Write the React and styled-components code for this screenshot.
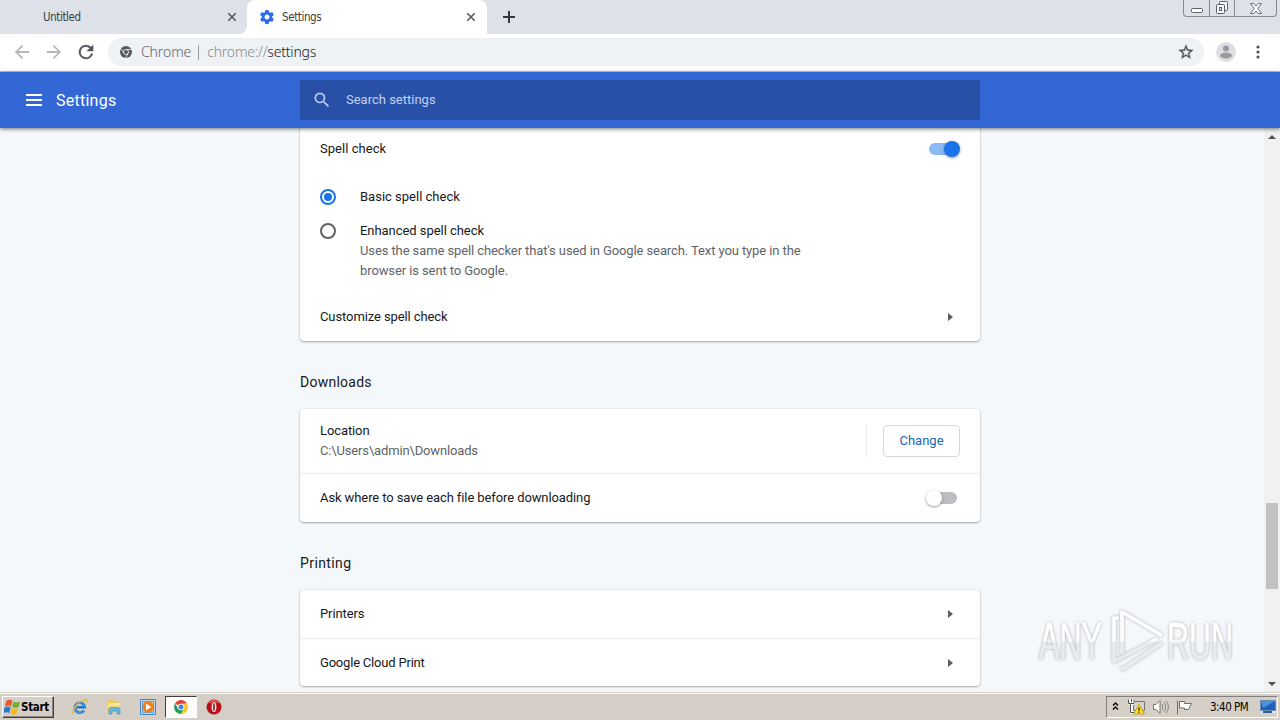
import styled, { createGlobalStyle } from "styled-components";
import { useState } from "react";

const GlobalStyle = createGlobalStyle`
  * { box-sizing: border-box; }
  body { margin: 0; overflow: hidden; }
  button { margin: 0; padding: 0; border: 0; background: none; font: inherit; }
  svg { display: block; flex: none; }
`;

const Screen = styled.div`
  display: flex;
  flex-direction: column;
  width: 1280px;
  height: 720px;
  overflow: hidden;
  position: relative;
  background: #f5f8fb;
  color: #17191c;
  font-family: Roboto, "Liberation Sans", sans-serif;
  font-size: 13px;
`;

/* browser frame */
const TabStrip = styled.div`
  display: flex;
  flex: none;
  height: 34px;
  background: #dee1e8;
`;
const Tab = styled.div`
  display: flex;
  align-items: center;
  width: ${(props) => (props.$active ? 240 : 247)}px;
  height: 34px;
  padding: 0 ${(props) => (props.$active ? "11px 0 13px" : "10px 0 43px")};
  border-radius: ${(props) => (props.$active ? "8px 8px 0 0" : "0 0 8px 0")};
  background: ${(props) => (props.$active ? "#fff" : "#dee1e8")};
  color: #3c4043;
  font-family: "DejaVu Sans Condensed", "DejaVu Sans", sans-serif;
  font-size: 11.5px;
  letter-spacing: -0.4px;
  svg:last-child { margin-left: auto; }
`;
const TabTitle = styled.span`
  margin-left: ${(props) => props.$gap || 0}px;
`;
const TabCorner = styled.div`
  background: #fff;
  flex: none;
`;
const TabRest = styled.div`
  display: flex;
  flex: 1;
  padding-left: 15px;
  align-items: center;
  border-radius: 0 0 0 8px;
  background: #dee1e8;
`;
const WindowButtons = styled.div`
  display: flex;
  align-self: flex-start;
  margin-left: auto;
  margin-right: 3px;
  height: 17px;
  border: 1px solid #858993;
  border-top: 0;
  border-radius: 0 0 4px 4px;
`;
const WindowButton = styled.div`
  display: flex;
  align-items: center;
  justify-content: center;
  width: ${(props) => props.$width}px;
  & + & { border-left: 1px solid #858993; }
`;
const Toolbar = styled.div`
  display: flex;
  flex: none;
  align-items: center;
  height: 38px;
  padding: 0 14px 1px;
  background: #fff;
  border-bottom: 1px solid #c5cad6;
  > svg { margin-right: 16px; }
`;
const AddressBar = styled.div`
  display: flex;
  flex: none;
  align-items: center;
  width: 1096px;
  height: 28px;
  margin-left: -2px;
  padding: 0 10px 0 12px;
  border-radius: 14px;
  background: #eff2f5;
  color: #5f6368;
  font-family: "Noto Sans", "Open Sans", sans-serif;
  font-weight: 300;
  font-size: 14px;
  line-height: 18px;
  svg:last-child { margin-left: auto; }
`;
const SiteName = styled.span`
  margin: -1px 0 0 9px;
  letter-spacing: -0.1px;
`;
const Divider = styled.span`
  width: 1px;
  height: 15px;
  margin: 0 8px 0 7px;
  background: #989ca1;
`;
const Url = styled.span`
  margin-top: -1px;
  color: #84888d;
  letter-spacing: -0.2px;
  b { font-weight: 300; color: #17191c; }
`;
const Avatar = styled.div`
  flex: none;
  margin: 0 20px 0 12px;
`;

/* settings page */
const Header = styled.header`
  display: flex;
  flex: none;
  align-items: center;
  height: 56px;
  padding-left: 26px;
  background: #3367d6;
  color: #fff;
  z-index: 1;
  box-shadow: 0 1px 4px rgba(0, 0, 0, 0.55);
`;
const PageTitle = styled.h1`
  width: 244px;
  margin: 0 0 0 14px;
  padding-top: 2px;
  font-size: 16px;
  font-weight: 400;
  line-height: 20px;
  letter-spacing: 0.25px;
`;
const SearchBox = styled.div`
  display: flex;
  align-items: center;
  flex: none;
  width: 680px;
  height: 40px;
  padding: 0 0 0 12px;
  background: #2850a7;
  color: #c3d2f2;
  line-height: 20px;
  svg { margin-right: 14px; }
`;
const SearchText = styled.span`
  letter-spacing: 0;
`;
const Viewport = styled.div`
  display: flex;
  flex: 1;
  min-height: 0;
  overflow: hidden;
`;
const Content = styled.main`
  flex: 1;
  padding-left: 300px;
`;
const Card = styled.section`
  width: 680px;
  height: ${(props) => props.$height}px;
  background: #fff;
  border-radius: ${(props) => (props.$cut ? "0 0 4px 4px" : "4px")};
  box-shadow: 0 1px 2px rgba(60, 64, 67, 0.4), 0 0 2px rgba(60, 64, 67, 0.2);
`;
const Heading = styled.h2`
  height: 68px;
  margin: 0;
  padding-top: 31px;
  font-size: 14px;
  line-height: 20px;
  font-weight: 400;
  letter-spacing: ${(props) => props.$spacing}px;
`;
const Row = styled.div`
  display: flex;
  align-items: center;
  justify-content: space-between;
  height: ${(props) => props.$height || 48}px;
  padding: 0 20px;
  line-height: 20px;
  & + & { box-sizing: content-box; border-top: 1px solid #e6e8eb; }
`;
const Label = styled.div`
  letter-spacing: ${(props) => props.$spacing ?? -0.1}px;
`;
const Note = styled.div`
  color: #5f6368;
  letter-spacing: ${(props) => props.$spacing ?? -0.1}px;
`;
const RadioGroup = styled.div`
  padding: 10px 20px 12px;
  line-height: 20px;
`;
const RadioRow = styled.div`
  display: flex;
  padding: 7px 0 ${(props) => (props.$last ? 0 : 7)}px;
`;
const Radio = styled.button`
  display: flex;
  align-items: center;
  justify-content: center;
  flex: none;
  width: 16px;
  height: 16px;
  margin: 2px 24px 0 0;
  border: 2px solid ${(props) => (props.$on ? "#1a73e8" : "#5f6368")};
  border-radius: 50%;
  &::after {
    content: "";
    width: 8px;
    height: 8px;
    border-radius: 50%;
    background: ${(props) => (props.$on ? "#1a73e8" : "transparent")};
  }
`;
const Switch = styled.button`
  display: flex;
  align-items: center;
  justify-content: ${(props) => (props.$on ? "flex-end" : "flex-start")};
  width: 28px;
  height: 12px;
  margin-right: 3px;
  border-radius: 6px;
  background: ${(props) => (props.$on ? "#8cb8f3" : "#bdbdc2")};
  &::after {
    content: "";
    width: 16px;
    height: 16px;
    margin: 0 -3px;
    border-radius: 50%;
    background: ${(props) => (props.$on ? "#1a73e8" : "#fff")};
    box-shadow: 0 1px 3px rgba(0, 0, 0, 0.4);
  }
`;
const Arrow = styled.span`
  margin-right: 7px;
  border: 4px solid transparent;
  border-left: 5px solid #5a5e63;
  border-right: 0;
`;
const ChangeArea = styled.div`
  display: flex;
  align-items: center;
  height: 32px;
  padding-left: 16px;
  border-left: 1px solid #e8eaed;
`;
const ChangeButton = styled.button`
  width: 77px;
  height: 32px;
  border: 1px solid #d5d8dc;
  border-radius: 4px;
  color: #1967b5;
  letter-spacing: 0;
`;
const Scrollbar = styled.div`
  display: flex;
  flex-direction: column;
  align-items: center;
  width: 16px;
  padding: 7px 0 6px;
  background: #f1f1f1;
`;
const ScrollArrow = styled.span`
  border: 4px solid transparent;
  ${(props) => (props.$down ? "border-top-color" : "border-bottom-color")}: #505050;
  ${(props) => (props.$down ? "border-bottom" : "border-top")}: 0;
  ${(props) => (props.$down ? "margin-top: auto;" : "")}
`;
const ScrollThumb = styled.span`
  width: 12px;
  height: 86px;
  margin-top: 364px;
  background: #c1c1c1;
`;
const Watermark = styled.svg`
  position: absolute;
  left: 1030px;
  top: 600px;
  z-index: 2;
`;

/* taskbar */
const Taskbar = styled.footer`
  display: flex;
  flex: none;
  align-items: center;
  height: 28px;
  padding: 1px 2px 0;
  background: #d6cfc7;
  border-top: 1px solid #d4d0c8;
  box-shadow: inset 0 1px #fff;
  color: #000;
`;
const StartButton = styled.button`
  display: flex;
  align-items: center;
  width: 52px;
  height: 22px;
  padding-left: 1px;
  border: 1px solid;
  border-color: #fff #404040 #404040 #fff;
  box-shadow: inset -1px -1px #8b8680;
  font-family: "DejaVu Sans Condensed", sans-serif;
  font-weight: 700;
  font-size: 11.5px;
  letter-spacing: -0.3px;
`;
const TaskIcons = styled.div`
  display: flex;
  align-items: center;
  margin-left: 9px;
`;
const TaskItem = styled.div`
  display: flex;
  align-items: center;
  justify-content: center;
  width: ${(props) => (props.$active ? 32 : 34)}px;
  height: 22px;
  border: 1px solid;
  border-color: ${(props) => (props.$active ? "#404040 #fff #fff #404040" : "transparent")};
  background: ${(props) => (props.$active ? "#fcfbfa" : "transparent")};
`;
const Tray = styled.div`
  display: flex;
  align-items: center;
  width: 172px;
  height: 22px;
  margin-left: auto;
  padding-left: 4px;
  border: 1px solid;
  border-color: #808080 #fff #fff #808080;
`;
const Clock = styled.span`
  width: 50px;
  margin-left: 17px;
  font-family: "DejaVu Sans Condensed", sans-serif;
  font-size: 11.5px;
  letter-spacing: -0.5px;
  white-space: nowrap;
`;

const CloseIcon = () => (
  <svg width="10" height="10" viewBox="0 0 10 10" stroke="#55585d" strokeWidth="1.6">
    <path d="M1.300 1.300l7.400 7.400M8.700 1.300L1.300 8.700" />
  </svg>
);
const GearIcon = () => (
  <svg width="14" height="14" viewBox="2 2 20 20">
    <path
      fill="#2b6de8"
      d="M19.43 12.98c.04-.32.07-.64.07-.98s-.03-.66-.07-.98l2.11-1.65c.19-.15.24-.42.12-.64l-2-3.46c-.12-.22-.39-.3-.61-.22l-2.49 1c-.52-.4-1.08-.73-1.69-.98l-.38-2.65A.49.49 0 0 0 14 2h-4c-.25 0-.46.18-.49.42l-.38 2.65c-.61.25-1.17.59-1.69.98l-2.49-1c-.23-.09-.49 0-.61.22l-2 3.46c-.13.22-.07.49.12.64l2.11 1.65c-.04.32-.07.65-.07.98s.03.66.07.98l-2.11 1.65c-.19.15-.24.42-.12.64l2 3.46c.12.22.39.3.61.22l2.49-1c.52.4 1.08.73 1.69.98l.38 2.65c.03.24.24.42.49.42h4c.25 0 .46-.18.49-.42l.38-2.65c.61-.25 1.17-.59 1.69-.98l2.49 1c.23.09.49 0 .61-.22l2-3.46c.12-.22.07-.49-.12-.64l-2.11-1.65zM12 15.5c-1.93 0-3.5-1.57-3.5-3.5s1.57-3.5 3.5-3.5 3.5 1.57 3.5 3.5-1.57 3.5-3.5 3.5z"
    />
  </svg>
);
const ArrowIcon = ({ flip }) => (
  <svg width="16" height="16" viewBox="3 3 18 18" fill="#b4b7bb">
    <path
      transform={flip ? "rotate(180 12 12)" : undefined}
      d="M20 11H7.83l5.59-5.59L12 4l-8 8 8 8 1.41-1.41L7.83 13H20v-2z"
    />
  </svg>
);
const ReloadIcon = () => (
  <svg width="16" height="16" viewBox="3 3 18 18" fill="#505458" stroke="#505458" strokeWidth=".4">
    <path d="M17.65 6.35A7.96 7.96 0 0 0 12 4a8 8 0 1 0 7.73 10h-2.08A6 6 0 1 1 12 6c1.66 0 3.14.69 4.22 1.78L13 11h7V4l-2.35 2.35z" />
  </svg>
);
const ChromeMono = () => (
  <svg width="12" height="12" viewBox="0 0 12 12">
    <circle cx="6" cy="6" r="6" fill="#54585d" />
    <circle cx="6" cy="6" r="2.5" fill="none" stroke="#eff2f5" strokeWidth="0.9" />
    <path d="M6 3.5h5.4M3.8 7.2L1.2 2.9M8.2 7.2L5.6 11.9" stroke="#eff2f5" strokeWidth="0.8" />
  </svg>
);
const StarIcon = () => (
  <svg width="16" height="16" viewBox="1 1 22 22" fill="#505458" stroke="#505458" strokeWidth=".5">
    <path d="M22 9.24l-7.19-.62L12 2 9.19 8.63 2 9.24l5.46 4.73L5.82 21 12 17.27 18.18 21l-1.63-7.03L22 9.24zM12 15.4l-3.76 2.27 1-4.28-3.32-2.88 4.38-.38L12 6.1l1.71 4.04 4.38.38-3.32 2.88 1 4.28L12 15.4z" />
  </svg>
);
const SearchIcon = () => (
  <svg width="20" height="20" viewBox="0 0 24 24" fill="#bdcdf2">
    <path d="M15.5 14h-.79l-.28-.27A6.47 6.47 0 0 0 16 9.5 6.5 6.5 0 1 0 9.5 16c1.61 0 3.09-.59 4.23-1.57l.27.28v.79l5 4.99L20.49 19l-4.99-5zm-6 0C7.01 14 5 11.99 5 9.5S7.01 5 9.5 5 14 7.01 14 9.5 11.99 14 9.5 14z" />
  </svg>
);

const WindowsFlag = () => (
  <svg width="17" height="17" viewBox="1 1 14 14">
    <path fill="#e8562a" d="M3 2.5c2-1.2 3.5-1 5 0L6.8 7.2c-1.600-1-3-1-5 0z" />
    <path fill="#6fae2e" d="M8.800 3c1.700 1 3.400 1 5.400 0L13 7.500c-2 1.100-3.600 1-5.300 0z" />
    <path fill="#2f78c8" d="M1.500 8c2-1.100 3.500-1 5 0l-1.200 4.700c-1.600-1-3-1-5 0z" />
    <path fill="#f6b91c" d="M7.300 8.400c1.700 1 3.400 1 5.400 0l-1.200 4.700c-2 1.100-3.600 1-5.300 0z" />
  </svg>
);
const ExplorerIcon = () => (
  <svg width="18" height="18" viewBox="0 0 18 18" fill="none">
    <path d="M13 12.500a5 5 0 1 1 .8-3.300H5.500" stroke="#1e73c8" strokeWidth="2.600" />
    <path d="M13 12.500a5 5 0 1 1 .8-3.300" stroke="#56b6ef" strokeWidth="0.800" />
    <path d="M2.500 16C-.5 14 7 3.500 13.500 1.700c2.500-.7 3 .8 2 3" stroke="#e5b531" strokeWidth="1.400" />
  </svg>
);
const FolderIcon = () => (
  <svg width="16" height="16" viewBox="0 0 16 16">
    <path d="M2 1h5l1 2h6v10H2z" fill="#e9c95e" />
    <path d="M3 4h11v8H3z" fill="#f8e99d" />
    <path d="M1 6h13v3H1z" fill="#f3dc7c" />
    <path d="M3 15V10.500q0-2 2-2h7q2 0 2 2V15h-3v-3H6v3z" fill="#65b8dc" stroke="#3b8fb9" strokeWidth=".6" />
  </svg>
);
const MediaIcon = () => (
  <svg width="16" height="16" viewBox="0 0 16 16">
    <path d="M.5.500h15v15H.5z" fill="#b9d5ee" stroke="#4387c4" />
    <path d="M2.500 2.500h11v11h-11z" fill="#f5b45c" stroke="#6ba5d7" />
    <circle cx="8" cy="8" r="5.500" fill="#f07c13" />
    <path d="M6 4.500l5.500 3.500L6 11.500z" fill="#fff" />
  </svg>
);
const ChromeIcon = () => (
  <svg width="14" height="14" viewBox="0 0 14 14">
    <path d="M7 7L1 3.500A7 7 0 0 1 13 3.500L7 3.900z" fill="#df4336" />
    <path d="M7 3.900L13 3.500A7 7 0 0 1 7 14L9.700 8.500z" fill="#f9c52a" />
    <path d="M1 3.500A7 7 0 0 0 7 14l2.700-5.400L4.300 8.500z" fill="#27995a" />
    <circle cx="7" cy="7" r="3.300" fill="#fff" />
    <circle cx="7" cy="7" r="2.500" fill="#4285e9" />
  </svg>
);
const OperaIcon = () => (
  <svg width="16" height="16" viewBox="0 0 16 16">
    <circle cx="8" cy="8" r="7.500" fill="#b90f18" />
    <path d="M3 4a6.500 6.500 0 0 1 10 0" stroke="#e76865" strokeWidth="1.500" fill="none" />
    <ellipse cx="8" cy="8" rx="2.400" ry="5" fill="#f7e7e6" />
    <ellipse cx="8" cy="8" rx=".8" ry="4.200" fill="#8e0b12" />
  </svg>
);
const TrayIcons = () => (
  <svg width="82" height="18" viewBox="0 0 82 18" fill="none">
    <path d="M2 7.500L4.500 5 7 7.500M2 11.500L4.500 9 7 11.500" stroke="#000" strokeWidth="1.400" />
    <path d="M22.500 3.500h11v9h-11z" fill="#d5d1cc" stroke="#77736e" />
    <path d="M18.500 1.500v4h2v9h5M18.500 5.500h4v-4M20.500 1v3" stroke="#fff" strokeWidth="2.500" />
    <path d="M17.500 1.500v4h2v9h6M18 5.500h5v-4M20.500 1v3" stroke="#55514d" />
    <path d="M28 6l5.500 10h-11z" fill="#ffdd20" stroke="#b49608" strokeWidth=".7" />
    <path d="M28 9.500v3M28 13.500v1.200" stroke="#222" strokeWidth="1.400" />
    <path d="M42.500 6.500H45l4-4v13l-4-4h-2.500z" fill="#fff" stroke="#77736e" />
    <path d="M51 6q2 3 0 6M53 4.500q3.500 4.500 0 9M55 3q5 6 0 12" stroke="#8b8782" />
    <path d="M66.500 2.500v14M68.500 3.500h5v2h7l-3 6h-4v-1.500h-5z" fill="#fff" stroke="#6e6a66" />
  </svg>
);
const DesktopIcon = () => (
  <svg width="16" height="14" viewBox="0 0 16 14">
    <path d="M.5.500h15v10H.5z" fill="#2160bd" stroke="#6d8db5" />
    <path d="M1 1h14L3 8z" fill="#4c93e0" />
    <path d="M0 11h16v2H0z" fill="#dce6ef" />
    <path d="M3 11h9v2H3z" fill="#315e92" />
  </svg>
);

function Brand() {
  return (
    <Watermark width="250" height="85" viewBox="0 0 250 85">
      <defs>
        <linearGradient id="brandFill" gradientUnits="userSpaceOnUse" x1="0" y1="0" x2="0" y2="80">
          <stop offset="0.51" stopColor="#fff" />
          <stop offset="0.53" stopColor="#e9ebed" />
        </linearGradient>
        <filter id="brandShadow" x="-10%" y="-10%" width="120%" height="120%">
          <feDropShadow dx="0" dy="0" stdDeviation="1.6" floodColor="#7f8388" floodOpacity="0.7" />
        </filter>
      </defs>
      <g
        filter="url(#brandShadow)"
        fill="url(#brandFill)"
        stroke="url(#brandFill)"
        strokeWidth="0.6"
        fontFamily="Liberation Sans, sans-serif"
        fontWeight="400"
        fontSize="52"
      >
        <text x="9" y="59" textLength="63" lengthAdjust="spacingAndGlyphs">ANY</text>
        <text x="137" y="59" textLength="66" lengthAdjust="spacingAndGlyphs">RUN</text>
        <g fill="none" strokeWidth="3.600" strokeLinejoin="round">
          <path d="M92 54V12l40 23.500" />
          <path d="M88.500 18H84v43.500l43-22.500" />
          <path d="M91 67l2 2 39-26" />
        </g>
      </g>
    </Watermark>
  );
}

function App() {
  const [spellCheck, setSpellCheck] = useState(true);
  const [mode, setMode] = useState("basic");
  const [ask, setAsk] = useState(false);

  return (
    <Screen>
      <GlobalStyle />
      <TabStrip>
        <TabCorner>
          <Tab>
            <TabTitle>Untitled</TabTitle>
            <CloseIcon />
          </Tab>
        </TabCorner>
        <Tab $active>
          <GearIcon />
          <TabTitle $gap={8}>Settings</TabTitle>
          <CloseIcon />
        </Tab>
        <TabRest>
          <svg width="14" height="14" viewBox="0 0 14 14" stroke="#34373b" strokeWidth="2">
            <path d="M7 1v12M1 7h12" />
          </svg>
          <WindowButtons>
            <WindowButton $width={25}>
              <svg width="12" height="17" viewBox="0 0 12 17">
                <rect x=".5" y="8.5" width="11" height="4" rx="1" fill="#fff" stroke="#5b5f69" />
              </svg>
            </WindowButton>
            <WindowButton $width={25}>
              <svg width="14" height="14" viewBox="0 0 14 14" fill="#f5f6f8" stroke="#5b5f69">
                <rect x="4.500" y=".5" width="8" height="9" rx="1" />
                <rect x="1.500" y="3.500" width="8" height="9" rx="1" />
                <rect x="4.500" y="6.500" width="2" height="3" />
              </svg>
            </WindowButton>
            <WindowButton $width={42}>
              <svg width="12" height="11" viewBox="0 0 12 11" fill="#fff" stroke="#5b5f69" strokeWidth=".9">
                <path d="M.5.500h3L6 3 8.500.500h3L7.800 5.500l3.700 5h-3L6 8l-2.500 2.500h-3l3.700-5z" />
              </svg>
            </WindowButton>
          </WindowButtons>
        </TabRest>
      </TabStrip>
      <Toolbar>
        <ArrowIcon />
        <ArrowIcon flip />
        <ReloadIcon />
        <AddressBar>
          <ChromeMono />
          <SiteName>Chrome</SiteName>
          <Divider />
          <Url>
            chrome://<b>settings</b>
          </Url>
          <StarIcon />
        </AddressBar>
        <Avatar>
          <svg width="20" height="20" viewBox="0 0 20 20" fill="#9b9b9d">
            <circle cx="10" cy="10" r="10" fill="#dedfe1" />
            <circle cx="10" cy="6.500" r="3" />
            <ellipse cx="10" cy="13.500" rx="6" ry="3" />
          </svg>
        </Avatar>
        <svg width="4" height="14" viewBox="0 0 4 14" fill="#505458">
          <circle cx="2" cy="2" r="1.600" />
          <circle cx="2" cy="7" r="1.600" />
          <circle cx="2" cy="12" r="1.600" />
        </svg>
      </Toolbar>
      <Header>
        <svg width="16" height="12" viewBox="0 0 16 12" fill="#fff">
          <path d="M0 0h16v2H0zM0 5h16v2H0zM0 10h16v2H0z" />
        </svg>
        <PageTitle>Settings</PageTitle>
        <SearchBox>
          <SearchIcon />
          <SearchText>Search settings</SearchText>
        </SearchBox>
      </Header>
      <Viewport>
        <Content>
          <Card $cut $height={213}>
            <Row $height={42}>
              <Label $spacing={0.05}>Spell check</Label>
              <Switch $on={spellCheck} onClick={() => setSpellCheck(!spellCheck)} />
            </Row>
            <RadioGroup>
              <RadioRow>
                <Radio $on={mode === "basic"} onClick={() => setMode("basic")} />
                <Label $spacing={0}>Basic spell check</Label>
              </RadioRow>
              <RadioRow $last>
                <Radio $on={mode === "enhanced"} onClick={() => setMode("enhanced")} />
                <div>
                  <Label $spacing={-0.05}>Enhanced spell check</Label>
                  <Note>
                    Uses the same spell checker that's used in Google search. Text you type in the
                    <br />
                    browser is sent to Google.
                  </Note>
                </div>
              </RadioRow>
            </RadioGroup>
            <Row>
              <Label>Customize spell check</Label>
              <Arrow />
            </Row>
          </Card>
          <Heading $spacing={0.25}>Downloads</Heading>
          <Card $height={113}>
            <Row $height={64}>
              <div>
                <Label>Location</Label>
                <Note $spacing={-0.15}>C:\Users\admin\Downloads</Note>
              </div>
              <ChangeArea>
                <ChangeButton>Change</ChangeButton>
              </ChangeArea>
            </Row>
            <Row>
              <Label>Ask where to save each file before downloading</Label>
              <Switch $on={ask} onClick={() => setAsk(!ask)} />
            </Row>
          </Card>
          <Heading $spacing={0.4}>Printing</Heading>
          <Card $height={96}>
            <Row>
              <Label>Printers</Label>
              <Arrow />
            </Row>
            <Row>
              <Label $spacing={-0.2}>Google Cloud Print</Label>
              <Arrow />
            </Row>
          </Card>
        </Content>
        <Scrollbar>
          <ScrollArrow />
          <ScrollThumb />
          <ScrollArrow $down />
        </Scrollbar>
      </Viewport>
      <Taskbar>
        <StartButton>
          <WindowsFlag />
          Start
        </StartButton>
        <TaskIcons>
          <TaskItem><ExplorerIcon /></TaskItem>
          <TaskItem><FolderIcon /></TaskItem>
          <TaskItem><MediaIcon /></TaskItem>
          <TaskItem $active><ChromeIcon /></TaskItem>
          <TaskItem><OperaIcon /></TaskItem>
        </TaskIcons>
        <Tray>
          <TrayIcons />
          <Clock>3:40 PM</Clock>
          <DesktopIcon />
        </Tray>
      </Taskbar>
      <Brand />
    </Screen>
  );
}
export default App;
